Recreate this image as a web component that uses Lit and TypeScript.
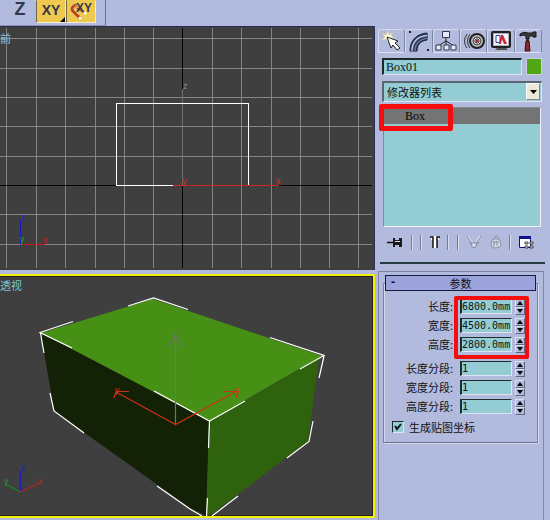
import { LitElement, html, css, svg } from "lit";
import { customElement, property, state } from "lit/decorators.js";

const GRID_X = [6, 36, 65, 95, 124, 153, 212, 241, 271, 300, 329, 358];
const GRID_Y = [11, 41, 70, 99, 129, 187, 217];

@customElement("front-viewport")
export class FrontViewport extends LitElement {
  static styles = css`
    :host { display: block; background: #3f3f3f; border-right: 1px solid #2b3158; border-top: 1px solid #272c50; }
    .scene { display: block; width: 100%; }
    .name { font: 11px "Noto Sans CJK SC", sans-serif; fill: #7cc8d4; }
    .axis { font: 9px "Liberation Sans", sans-serif; }
  `;
  render() {
    return html`<svg class="scene" viewBox="0 0 374 243" role="img" aria-label="前">
      <g stroke="#858585" shape-rendering="crispEdges">
        ${GRID_X.map((x) => svg`<path d="M${x + 0.5} 1V241"/>`)}
        ${GRID_Y.map((y) => svg`<path d="M0 ${y + 0.5}H372"/>`)}
      </g>
      <rect x="0" y="158" width="116" height="1" fill="#050505"/>
      <rect x="278" y="158" width="94" height="1" fill="#050505"/>
      <rect x="182" y="1" width="1" height="61" fill="#050505"/>
      <rect x="182" y="159" width="1" height="82" fill="#050505"/>
      <rect x="182" y="62" width="1" height="96" fill="#6e6e6e"/>
      <path fill="none" stroke="#fff" shape-rendering="crispEdges" d="M173 158.500H116.500V76.500H248.500V158"/>
      <rect x="173" y="158" width="106" height="1" fill="#c8282c"/>
      <rect x="20" y="193" width="1" height="25" fill="#1514c0"/>
      <rect x="22" y="217" width="23" height="1" fill="#d01818"/>
      <text class="name" x="0" y="16">前</text>
      <text class="axis" x="183" y="62" fill="#8a8a8a">z</text>
      <text class="axis" x="182" y="157" fill="#e02828">y</text>
      <text class="axis" x="276" y="157" fill="#e02828">x</text>
      <text class="axis" x="21" y="193" fill="#1a18d8">z</text>
      <text class="axis" x="20" y="215" fill="#12b020">y</text>
      <text class="axis" x="43" y="216" fill="#d81818">x</text>
    </svg>`;
  }
}

@customElement("perspective-viewport")
export class PerspectiveViewport extends LitElement {
  static styles = css`
    :host { display: block; background: #3f3f3f; border: 2px solid #f2ee10; border-left: 0; }
    .scene { display: block; width: 100%; }
    .name { font: 11px "Noto Sans CJK SC", sans-serif; fill: #7cc8d4; }
    .axis { font: 9px "Liberation Sans", sans-serif; }
  `;
  render() {
    return html`<svg class="scene" viewBox="0 276 373 240" role="img" aria-label="透视">
      <path fill="none" stroke="#24241c" d="M0 276.5H372.5V515.5H0"/>
      <path fill="#469016" d="M41 333L153 299L322 356L209 421Z"/>
      <path fill="#132106" d="M41 333L209 421L207 516L190 508L54 411Z"/>
      <path fill="#2f620d" d="M209 421L319 358L308 441L212 514L206 516Z"/>
      <g fill="none" stroke="#fff" stroke-width="1.2">
        <path d="M73 321.5L40 332.5L72 348M40.500 333L44 353M50 393L54 411L84 433M128 306L153.500 298L188 309.500M270 337.500L324 355.500L300 369M324 356L319 378M313 421L309 441.500L287 458M154 391L209.500 421L245 401M209.500 421L208.500 448M157 486L190 509L202 516M207.500 498L206.500 516M212 516L238 496"/>
      </g>
      <path fill="none" stroke="#737373" stroke-width="1.2" d="M175.500 424V332M168 347L175.500 337L183 347"/>
      <path fill="none" stroke="#cc3018" stroke-width="1.2" d="M237 391L175.500 424.500L116 392M224 391.500H238L236 398M129 391.500H116L114 398"/>
      <path fill="none" stroke="#2018b8" stroke-width="1.2" d="M20.500 492V471"/>
      <path fill="none" stroke="#158a20" stroke-width="1.2" d="M20.500 492L5 484"/>
      <path fill="none" stroke="#b82020" stroke-width="1.2" d="M20.500 492L40 483"/>
      <text class="name" x="0" y="290">透视</text>
      <text class="axis" x="173" y="337" fill="#707070">z</text>
      <text class="axis" x="115" y="393" fill="#e03018">y</text>
      <text class="axis" x="235" y="393" fill="#e03018">x</text>
      <text class="axis" x="21" y="471" fill="#1818d0">z</text>
      <text class="axis" x="4" y="484" fill="#15a020">y</text>
      <text class="axis" x="38" y="484" fill="#d02020">x</text>
    </svg>`;
  }
}

@customElement("spin-field")
export class SpinField extends LitElement {
  @property() label = "";
  @property() value = "";
  static styles = css`
    :host { display: flex; align-items: center; justify-content: flex-end; height: 15px; }
    label { font: 11px/15px "Noto Sans CJK SC", sans-serif; color: #111; margin-right: 7px; white-space: nowrap; }
    input { box-sizing: border-box; width: 52px; height: 15px; margin: 0 3px 0 0; padding: 0; border: 1px solid; border-left-width: 2px; border-color: #202c30 #dfe4f4 #dfe4f4 #202c30; border-radius: 0; background: #93cdd3; color: #08191c; font: 10px "DejaVu Sans Mono", monospace; outline: 0; }
    .spin { display: grid; }
    button { display: grid; place-items: center; width: 10px; height: 8px; padding: 0; border: 1px solid; border-color: #dde2f3 #60687e #60687e #dde2f3; background: #b2bbdd; }
    svg { display: block; width: 6px; height: 4px; }
  `;
  private step(d: number) {
    const mm = this.value.endsWith("mm");
    const n = Math.max(mm ? 0 : 1, parseFloat(this.value) + d);
    this.value = mm ? n.toFixed(1) + "mm" : String(n);
  }
  render() {
    return html`<label for="f">${this.label}:</label>
      <input id="f" .value=${this.value} @change=${(e: Event) => (this.value = (e.target as HTMLInputElement).value)} />
      <span class="spin">
        <button aria-label="+" @click=${() => this.step(1)}><svg viewBox="0 0 6 4"><path d="M0 4L3 0L6 4Z" /></svg></button>
        <button aria-label="-" @click=${() => this.step(-1)}><svg viewBox="0 0 6 4"><path d="M0 0L3 4L6 0Z" /></svg></button>
      </span>`;
  }
}

const TABS = [
  { name: "创建", icon: svg`<path d="M7 0L8 5L12 2L10 6L14 8L9 8L7 13L6 9L0 10L4 7L1 3L5 5Z" fill="#fffbe0" stroke="#cdbf88" stroke-width=".5"/><path d="M6 7L17 11L14 13L19 18L16 20L12 15L10 18Z" fill="#fff" stroke="#222"/>` },
  { name: "修改", icon: svg`<path d="M2 21C2 11 8 4 19 3V10C12 11 9 15 9 21Z" fill="#33415f" stroke="#161b2c"/><path d="M4 21C4 12 10 6 19 5.500" fill="none" stroke="#b9c6ea" stroke-width="1.500"/><path d="M7 21C7 14 12 9 19 8.500" fill="none" stroke="#7d8cb8"/><path d="M1 1h2v2H1zM19 19h2v2h-2z" fill="#222"/>` },
  { name: "层次", icon: svg`<path d="M11 8V12M3 16L11 11L19 16M11 12V16" fill="none" stroke="#222"/><path d="M7.500 1.500h7v6h-7zM1 15h5v5H1zM9 15h5v5H9zM16 15h5v5h-5z" fill="#e6e9f8" stroke="#333b52"/>` },
  { name: "运动", icon: svg`<path d="M4 4Q-1 11 4 18M7 4Q2 11 7 18" fill="none" stroke="#333"/><circle cx="14" cy="11" r="7" fill="#bbb" stroke="#222" stroke-width="2"/><circle cx="14" cy="11" r="4" fill="#e4e4e8" stroke="#555"/><path d="M14 7V15M10 11H18M11 8L17 14M17 8L11 14" stroke="#444"/><circle cx="14" cy="11" r="1.500" fill="#9c2834"/>` },
  { name: "显示", icon: svg`<rect x="2" y="2" width="18" height="15" rx="1" fill="#a9b0c0" stroke="#222" stroke-width="2"/><path d="M4 4h14v11H4z" fill="#f4f4ff"/><path d="M6 5.500h4v7H6z" fill="#fff" stroke="#2740b0"/><path d="M11 5L13 5L17 14H14L12 9L11 14H9Z" fill="#d02530"/><path d="M7 18h9l2 2H5z" fill="#555"/>` },
  { name: "工具", icon: svg`<path d="M3 4Q7 1 11 3H16V2H19V7H16V6H12V9H9V6Q6 4 3 6Z" fill="#3a3a3e" stroke="#151515"/><path d="M9 9h3v2H9z" fill="#333"/><path d="M9 11h3l1 10H8Z" fill="#8a2a28" stroke="#331212"/>` },
];

@customElement("command-panel")
export class CommandPanel extends LitElement {
  @state() private tab = 1;
  static styles = css`
    :host { display: flex; flex-direction: column; padding: 3px 5px 0 3px; }
    button { padding: 0; border: 0; background: none; }
    .tabs { display: grid; grid-template-columns: repeat(6, 1fr); height: 24px; margin: 0 3px 0 0; }
    .tab { display: grid; place-items: center; border: 1px solid; border-color: #d3daee #7d86a2 #dde2f3 #d3daee; border-radius: 3px 3px 0 0; }
    .tab.on { border-bottom-color: transparent; }
    .tab svg { width: 22px; height: 22px; }
    .object { display: flex; gap: 4px; margin: 5px 3px 0 4px; }
    .object input { box-sizing: border-box; flex: 1; min-width: 0; height: 17px; padding: 0 2px; border: 1px solid; border-width: 2px 1px 1px 2px; border-color: #1c282c #dfe4f4 #dfe4f4 #1c282c; background: #93cdd3; font: 12px "Liberation Serif", serif; color: #08191c; outline: 0; }
    .swatch { width: 16px; height: 17px; background: #50a814; border: 1px solid #c9d2dc; }
    .modifiers { position: relative; margin: 6px 3px 0 4px; }
    select { display: block; appearance: none; box-sizing: border-box; width: 100%; height: 21px; padding: 0 20px 0 3px; border: 1px solid; border-width: 2px 1px 1px 2px; border-color: #58676f #dfe4f4 #dfe4f4 #58676f; border-radius: 0; background: #93cdd3; font: 11px/16px "Noto Sans CJK SC", sans-serif; color: #111; }
    .drop { position: absolute; right: 2px; top: 2px; width: 14px; height: 17px; display: grid; place-items: center; background: #ece9d8; border: 1px solid; border-color: #fff #888 #888 #fff; pointer-events: none; box-sizing: border-box; }
    .drop svg { width: 7px; height: 4px; }
    .stack { position: relative; height: 120px; margin: 5px 4px 0 5px; border: 1px solid; border-color: #7f8c92 #eef1fa #eef1fa #7f8c92; background: #93cdd3; box-sizing: border-box; }
    .entry { display: block; width: 100%; height: 16px; padding-left: 21px; background: #747474; text-align: left; font: 12px/16px "Liberation Serif", serif; color: #080808; }
    .mark { position: absolute; box-sizing: border-box; border: 5px solid #f40d0d; border-radius: 2px; pointer-events: none; }
    .stack .mark { left: -5px; top: -4px; width: 74px; height: 27px; }
    .tools { display: flex; align-items: center; justify-content: space-between; height: 18px; margin: 6px 11px 0 9px; }
    .tools svg { display: block; height: 18px; }
    .bar { width: 1px; height: 15px; background: #737b95; border-right: 1px solid #d8def0; }
    .rule { height: 2px; margin: 11px 0 0 2px; background: #263b46; }
    .rollouts { flex: 1; margin: 7px 1px 0 0; padding: 3px 5px 0 4px; border: 1px solid; border-bottom: 0; border-color: #7b829b #8088a2 #7b829b #7b829b; }
    .head { position: relative; display: block; box-sizing: border-box; width: calc(100% - 4px); height: 16px; margin: 0 2px; border: 1px solid #15193a; background: #9ba2dc; font: 11px/13px "Noto Sans CJK SC", sans-serif; color: #111; }
    .minus { position: absolute; left: 5px; top: 0; font: bold 12px/13px "Liberation Sans", sans-serif; }
    .group { margin-top: -8px; padding: 15px 12px 6px 8px; border: 1px solid; border-color: #7b829b #7b829b #6b7188 #7b829b; box-shadow: inset 1px 0 #d3daee, 1px 1px #d3daee; }
    .fields { position: relative; display: grid; gap: 4px; }
    .sizes { margin-bottom: 9px; }
    .sizes .mark { right: -4px; top: -3px; width: 75px; height: 63px; border-width: 4px; }
    .check { display: flex; align-items: center; gap: 5px; height: 18px; margin-top: 4px; font: 11px/18px "Noto Sans CJK SC", sans-serif; color: #111; white-space: nowrap; }
    .check input { appearance: none; box-sizing: border-box; width: 12px; height: 12px; margin: 0; border: 1px solid; border-color: #1c282c #dfe4f4 #dfe4f4 #1c282c; background: #93cdd3; }
    .box { display: grid; }
    .box > * { grid-area: 1 / 1; }
    .box svg { width: 12px; height: 12px; pointer-events: none; visibility: hidden; }
    .box input:checked + svg { visibility: visible; }
  `;
  render() {
    return html`
      <nav class="tabs">
        ${TABS.map((t, i) => html`<button class="tab ${i === this.tab ? "on" : ""}" aria-label=${t.name} @click=${() => (this.tab = i)}><svg viewBox="0 0 22 22">${t.icon}</svg></button>`)}
      </nav>
      <div class="object"><input aria-label="名称" value="Box01" /><button class="swatch" aria-label="颜色"></button></div>
      <div class="modifiers">
        <select aria-label="修改器列表"><option>修改器列表</option></select>
        <span class="drop"><svg viewBox="0 0 7 4"><path d="M0 0H7L3.500 4Z" /></svg></span>
      </div>
      <div class="stack"><button class="entry">Box</button><span class="mark"></span></div>
      <div class="tools">
        <button aria-label="锁定堆栈"><svg width="16" height="18" viewBox="0 0 16 18"><path d="M0 9.500H6" stroke="#111" stroke-width="1.500"/><path d="M6 5h2v2h4V5h3v9h-3v-2H8v2H6z" fill="#1a1a1a"/><path d="M8 8.500h5" stroke="#dde"/></svg></button>
        <span class="bar"></span><span class="bar"></span>
        <button aria-label="显示最终结果"><svg width="10" height="18" viewBox="0 0 10 18"><path d="M1 3H9V7H7V15H3V7H1Z" fill="#fff"/><path d="M0 4H3V15M10 4H7V15" fill="none" stroke="#111" stroke-width="1.500"/></svg></button>
        <span class="bar"></span><span class="bar"></span>
        <button aria-label="使唯一"><svg width="16" height="18" viewBox="0 0 16 18"><path d="M1 3L6 10M15 3L10 10M3 9L6 12M13 9L10 12" fill="none" stroke="#7e8499"/><path d="M2 3L7 10M14 3L9 10" stroke="#eef1fa"/><circle cx="8" cy="12" r="2.500" fill="#d8deee" stroke="#7e8499"/></svg></button>
        <button aria-label="移除修改器"><svg width="12" height="18" viewBox="0 0 12 18"><path d="M2 7Q6 4 10 7L11 12Q10 15 6 15Q1 15 1 11Z" fill="#d0d6e6" stroke="#858b9f"/><path d="M4 5Q6 1 9 5M3 9H9M4 8V13M7 8V13" fill="none" stroke="#858b9f"/></svg></button>
        <span class="bar"></span>
        <button aria-label="配置修改器集"><svg width="15" height="18" viewBox="0 0 15 18"><path d="M.5 3.500h11v11H.5z" fill="#fff" stroke="#10108c"/><path d="M0 3h12v3H0z" fill="#10108c"/><path d="M6 9h3v2H6zM11 9h3v2h-3zM6 13h3v2H6zM11 13h3v2h-3z" fill="#eee" stroke="#222" stroke-width=".8"/></svg></button>
      </div>
      <div class="rule"></div>
      <section class="rollouts">
        <button class="head"><span class="minus">-</span>参数</button>
        <div class="group">
          <div class="fields sizes">
            <spin-field label="长度" value="6800.0mm"></spin-field>
            <spin-field label="宽度" value="4500.0mm"></spin-field>
            <spin-field label="高度" value="2800.0mm"></spin-field>
            <span class="mark"></span>
          </div>
          <div class="fields">
            <spin-field label="长度分段" value="1"></spin-field>
            <spin-field label="宽度分段" value="1"></spin-field>
            <spin-field label="高度分段" value="1"></spin-field>
          </div>
          <label class="check"><span class="box"><input type="checkbox" checked /><svg viewBox="0 0 12 12"><path d="M3 5L5 8L9 3" fill="none" stroke="#0b1416" stroke-width="2"/></svg></span>生成贴图坐标</label>
        </div>
      </section>`;
  }
}

@customElement("app-root")
export class AppRoot extends LitElement {
  static styles = css`
    :host { display: block; min-height: 100vh; background: #b2bbdd; }
    .bar { display: flex; height: 26px; box-sizing: border-box; }
    .group { display: flex; padding-right: 9px; border-right: 1px solid #6b728c; border-bottom: 1px solid #8b93b0; }
    .tool { display: grid; justify-items: center; align-items: start; width: 30px; height: 23px; box-sizing: border-box; padding: 0; border: 0; font: bold 14px/18px "Liberation Sans", sans-serif; color: #303848; background: none; }
    .z { width: 36px; padding-left: 4px; font-size: 18px; }
    .on { background: #efc94f; border: 1px solid; border-color: transparent #f6edc8 #f6edc8 #6b6850; }
    .stackup { display: grid; justify-items: center; }
    .stackup > * { grid-area: 1 / 1; }
    .flyout { display: grid; width: 100%; height: 21px; }
    .flyout > * { grid-area: 1 / 1; }
    .flyout svg { width: 5px; height: 5px; align-self: end; justify-self: end; }
    .magnet { width: 24px; height: 20px; }
    .snap { line-height: 14px; font-size: 12px; padding-left: 6px; z-index: 1; }
    .main { display: grid; grid-template-columns: 1fr 175px; }
    .views { display: grid; align-content: start; gap: 4px; min-width: 0; padding-bottom: 2px; }
  `;
  render() {
    return html`
      <header class="bar">
        <div class="group">
          <button class="tool z">Z</button>
          <button class="tool on"><span class="flyout"><span>XY</span><svg viewBox="0 0 5 5"><path d="M5 0V5H0Z" /></svg></span></button>
          <button class="tool on"><span class="stackup"><span class="snap">XY</span>
            <svg class="magnet" viewBox="0 0 24 20"><path d="M8 4Q1 6 4 10L11 17" fill="none" stroke="#b84322" stroke-width="3"/><path d="M8 4Q3 7 6 10L10 14" fill="none" stroke="#f0b080" stroke-width="1"/><path d="M8 7L16 12" stroke="#b84322" stroke-width="2"/><circle cx="16" cy="12" r="1.500" fill="#fff"/><circle cx="11" cy="17" r="1.500" fill="#fff"/></svg></span></button>
        </div>
      </header>
      <main class="main">
        <div class="views"><front-viewport></front-viewport><perspective-viewport></perspective-viewport></div>
        <command-panel></command-panel>
      </main>`;
  }
}
